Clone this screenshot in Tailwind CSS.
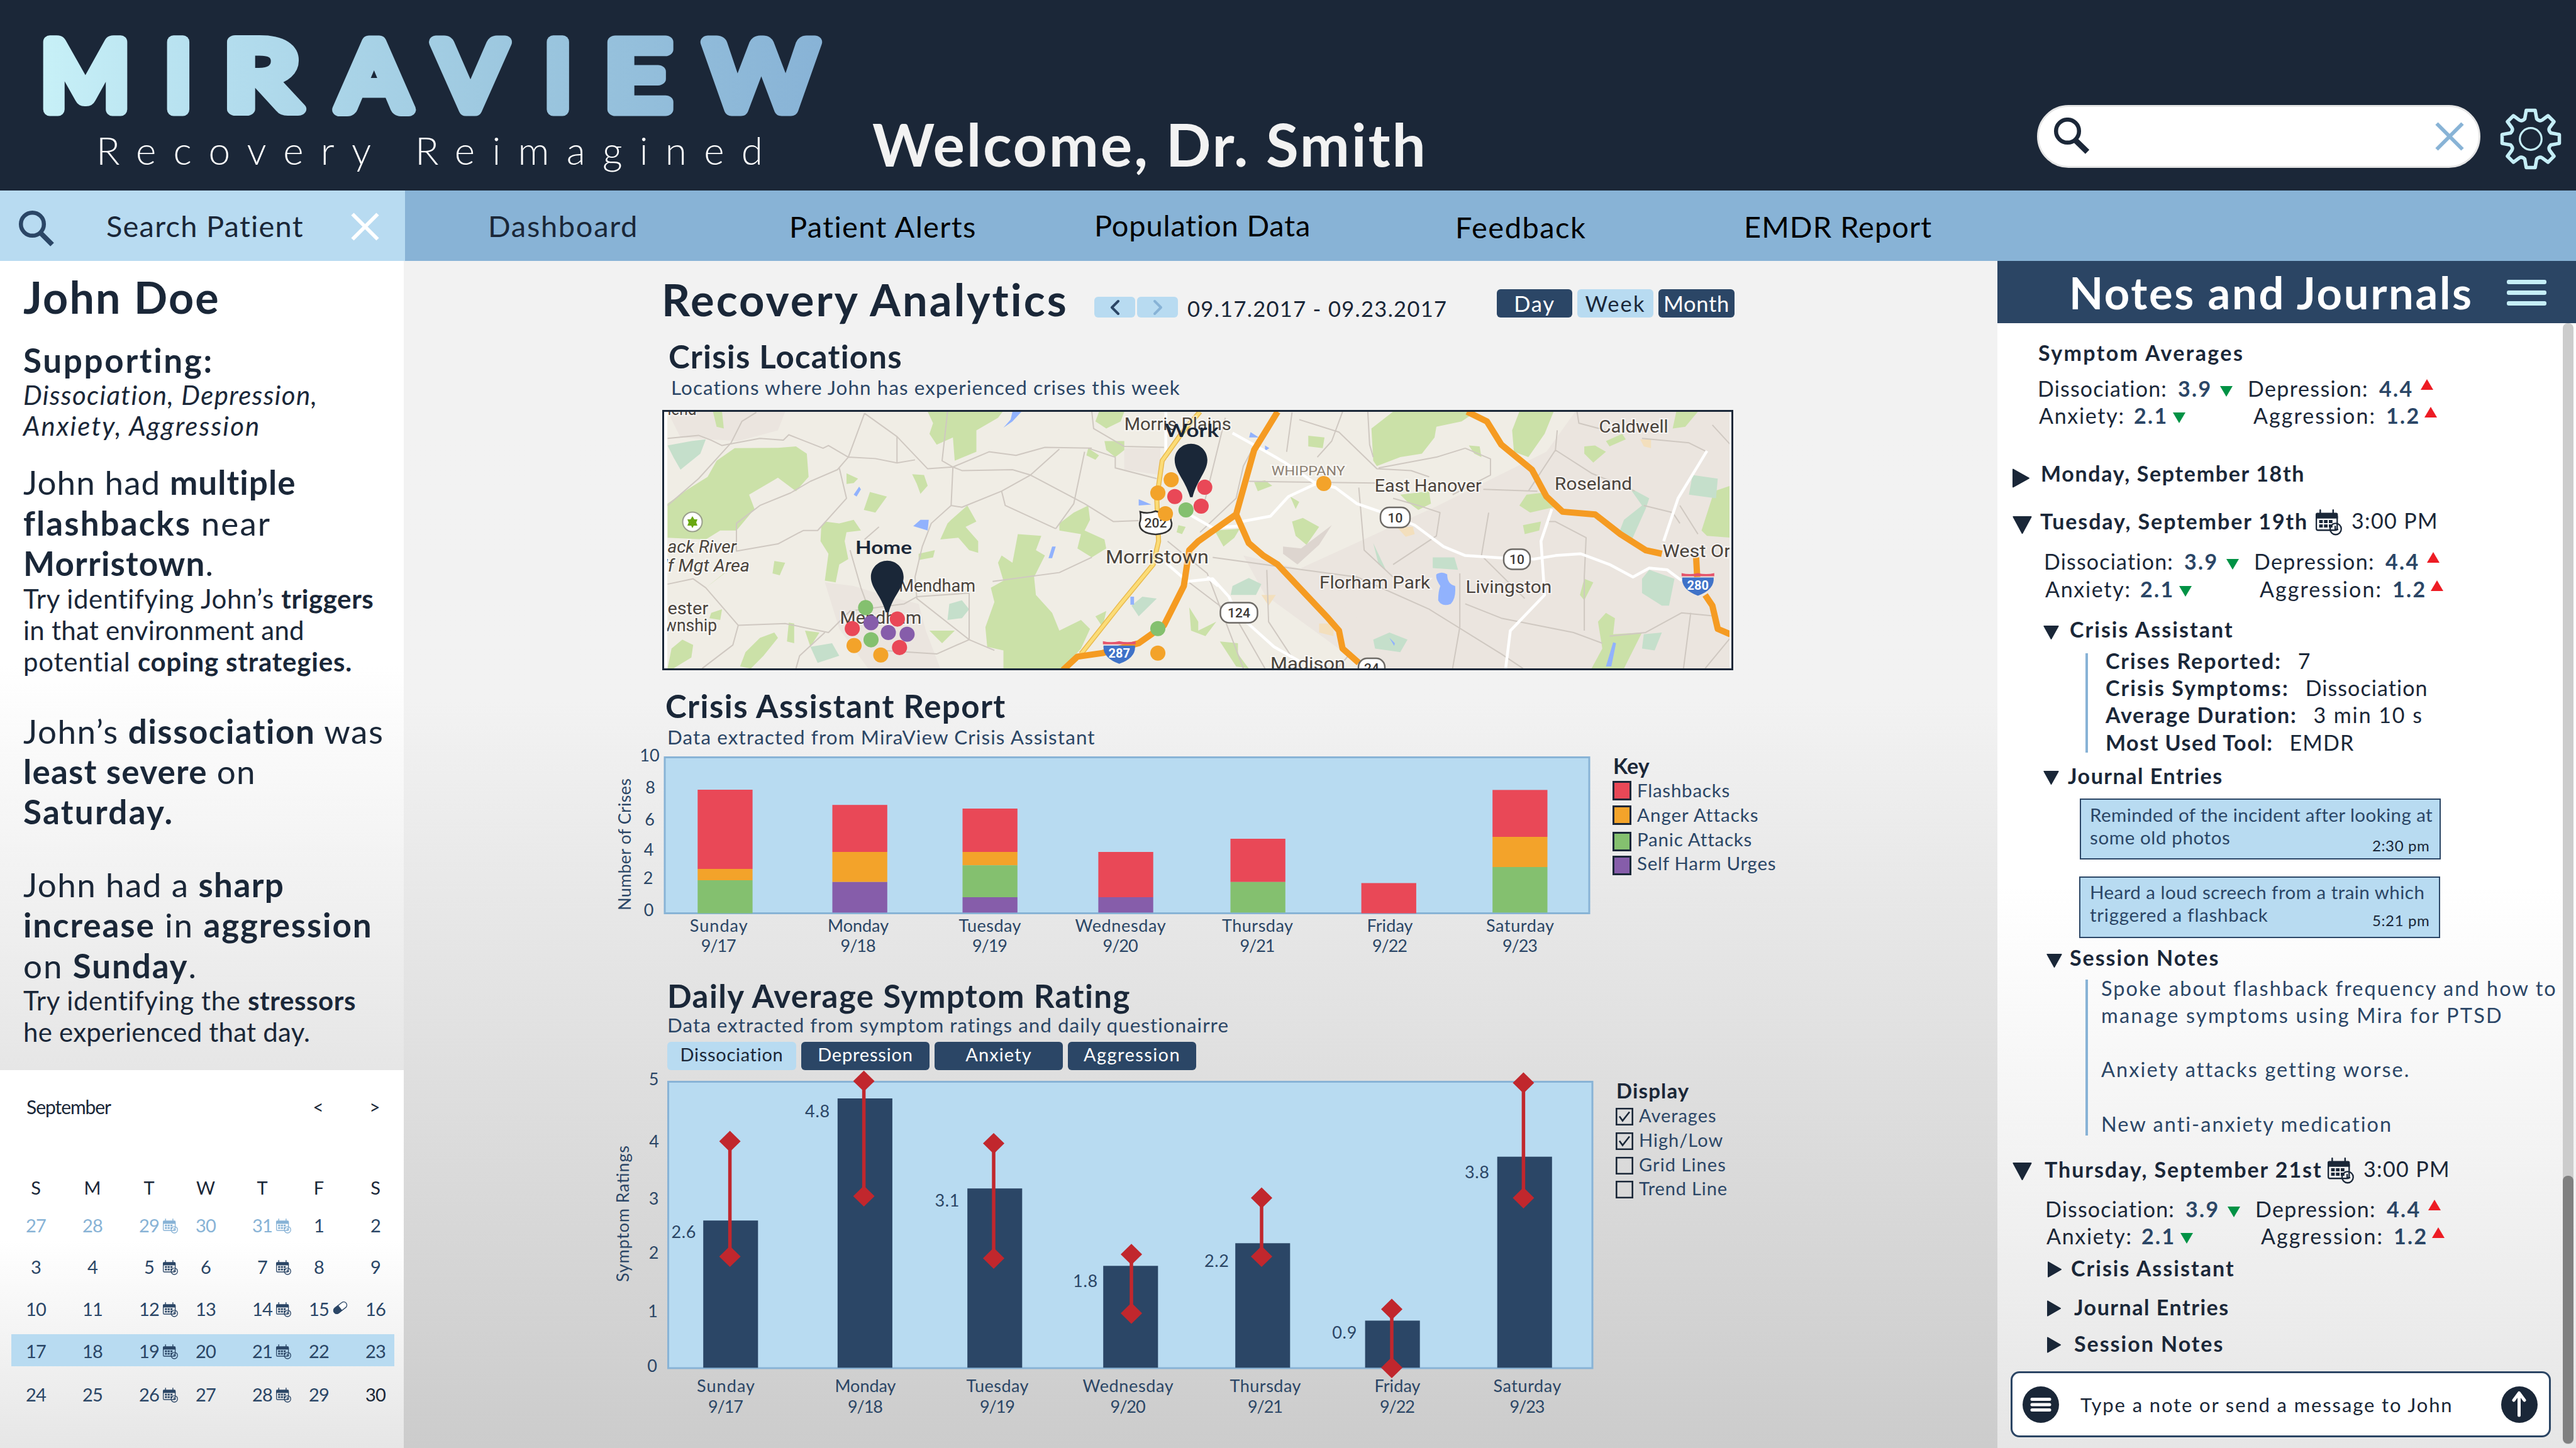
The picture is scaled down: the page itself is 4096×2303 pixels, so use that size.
<!DOCTYPE html>
<html lang="en">
<head>
<meta charset="utf-8">
<title>MiraView – Recovery Reimagined</title>
<script src="https://cdn.jsdelivr.net/npm/@tailwindcss/browser@4"></script>
</head>
<body class="w-[4096px] h-[2303px] overflow-hidden font-[Lato,sans-serif] text-[#1a2738] bg-white whitespace-nowrap">

<!-- Shared icons -->
<svg class="hidden">
  <symbol id="cal" viewBox="0 0 24 24">
    <mask id="calmask" maskUnits="userSpaceOnUse" x="0" y="0" width="24" height="24">
      <rect width="24" height="24" fill="#fff"/>
      <circle cx="18.2" cy="17.9" r="6.7" fill="#000"/>
      <path d="M4.2 0V5.4M15.9 0V5.4" stroke="#000" stroke-width="3.2" stroke-linecap="round"/>
    </mask>
    <g mask="url(#calmask)">
      <path d="M1.6 3.2H18.6Q20.2 3.2 20.2 4.8V8.4H0V4.8Q0 3.2 1.6 3.2Z" fill="currentColor"/>
      <path d="M.65 6V17.4Q.65 19 2.2 19H18Q19.6 19 19.6 17.4V6" fill="none" stroke="currentColor" stroke-width="1.3"/>
      <path d="M3.2 9.7h3.3v2.8H3.2zM7.6 9.7h3.3v2.8H7.6zM12 9.7h3.3v2.8H12zM3.2 13.7h3.3v2.8H3.2zM7.6 13.7h3.3v2.8H7.6zM12 13.7h3.3v2.8H12z" fill="currentColor"/>
    </g>
    <path d="M4.2 .7V4.6M15.9 .7V4.6" stroke="currentColor" stroke-width="1.4" stroke-linecap="round"/>
    <circle cx="18.2" cy="17.9" r="5.1" fill="none" stroke="currentColor" stroke-width="1.3"/>
    <path d="M17.8 15V18.4H20.6" fill="none" stroke="currentColor" stroke-width="1.3"/>
  </symbol>
  <symbol id="right" viewBox="0 0 27 31" preserveAspectRatio="none"><path d="M1 1.5V29.5L26 15.5Z" fill="#1a2738" stroke="#1a2738" stroke-width="2" stroke-linejoin="round"/></symbol>
  <symbol id="down" viewBox="0 0 31 28" preserveAspectRatio="none"><path d="M1.5 1H29.5L15.5 27Z" fill="#1a2738" stroke="#1a2738" stroke-width="2" stroke-linejoin="round"/></symbol>
</svg>

<!-- Header -->
<header class="flex items-start h-[303px] bg-[#1b2738]">
  <svg class="shrink-0 w-[1386px] h-[303px]" viewBox="0 0 1386 303">
    <defs>
      <linearGradient id="brand" gradientUnits="userSpaceOnUse" x1="71" y1="0" x2="1306" y2="0">
        <stop offset="0" stop-color="#c7f0f7"/><stop offset=".25" stop-color="#b2dced"/><stop offset=".6" stop-color="#9cc7df"/><stop offset="1" stop-color="#88b3d6"/>
      </linearGradient>
    </defs>
    <g fill="url(#brand)" stroke="url(#brand)" stroke-width="21" stroke-linejoin="round" text-anchor="middle" class="text-[149px]">
      <text x="135.600" y="173.500" textLength="140" lengthAdjust="spacingAndGlyphs">M</text>
      <text x="283.400" y="173.500">I</text>
      <text x="416" y="173.500" textLength="118" lengthAdjust="spacingAndGlyphs">R</text>
      <text x="594.800" y="173.500" textLength="111" lengthAdjust="spacingAndGlyphs">A</text>
      <text x="748" y="173.500" textLength="110" lengthAdjust="spacingAndGlyphs">V</text>
      <text x="887" y="173.500">I</text>
      <text x="1014" y="173.500" textLength="104" lengthAdjust="spacingAndGlyphs">E</text>
      <text x="1210.500" y="173.500" textLength="175" lengthAdjust="spacingAndGlyphs">W</text>
    </g>
    <text x="153" y="262.400" fill="#fff" class="text-[62px] font-light" textLength="1060">Recovery Reimagined</text>
  </svg>
  <h1 class="pt-[179px] pl-px text-[94.5px] leading-[100px] font-bold tracking-[0.03em] text-[#f2f2f2]">Welcome, Dr. Smith</h1>
  <div class="ml-auto mr-[31px] mt-[167px] flex w-[705px] h-[100px] rounded-[50px] border-[3px] border-[#e6e6e6] bg-white pl-[23px] pt-[17px] pr-[23px] justify-between">
    <svg class="w-[62px] h-[62px]" viewBox="0 0 62 62" fill="none" stroke="#1b2738"><circle cx="22.5" cy="21.5" r="18.3" stroke-width="6.5"/><path d="M34.5 35.5L54 54.5" stroke-width="9"/></svg>
    <svg class="mt-[7px] w-[46px] h-[46px]" viewBox="0 0 46 46" fill="none" stroke="#88b3d6" stroke-width="6"><path d="M2.5 2.5L43.5 43.5M43.5 2.5L2.5 43.5"/></svg>
  </div>
  <svg class="mt-[172px] mr-[23px] w-[98px] h-[98px]" viewBox="-49 -49 98 98" fill="none" stroke="#c5eef7" stroke-width="5.5" stroke-linejoin="round">
    <path d="M-7.1 -45.5H7.1L9.5 -32Q14 -27.5 18 -30L27.5 -37L37 -27.5L30 -18Q27.5 -14 32 -9.5L45.5 -7.1V7.1L32 9.5Q27.5 14 30 18L37 27.5L27.5 37L18 30Q14 27.5 9.5 32L7.1 45.5H-7.1L-9.5 32Q-14 27.5 -18 30L-27.5 37L-37 27.5L-30 18Q-27.5 14 -32 9.5L-45.5 7.1V-7.1L-32 -9.5Q-27.5 -14 -30 -18L-37 -27.5L-27.5 -37L-18 -30Q-14 -27.5 -9.5 -32Z"/>
    <circle r="17.3" stroke-width="3.2"/>
  </svg>
</header>

<!-- Navigation -->
<nav class="flex h-[112px] bg-[#88b3d6] text-[47px] leading-[56px] text-black">
  <div class="flex w-[644px] bg-[#b8dbf1] text-[#1a2738]">
    <svg class="ml-[29px] mt-[31px] w-[60px] h-[60px]" viewBox="0 0 60 60" fill="none" stroke="#2b4666"><circle cx="22.5" cy="22.5" r="18.3" stroke-width="6.5"/><path d="M35.5 36.5L54 55" stroke-width="8"/></svg>
    <span class="ml-[80px] pt-[28px] w-[389px] tracking-[0.026em]">Search Patient</span>
    <svg class="mt-[35px] w-[45px] h-[45px]" viewBox="0 0 45 45" fill="none" stroke="#fff" stroke-width="6"><path d="M2.5 2.500L42.5 42.5M42.5 2.5L2.5 42.5"/></svg>
  </div>
  <a class="ml-[132px] w-[479px] pt-[28px] tracking-[0.036em] text-[#1a2738]">Dashboard</a>
  <a class="w-[485px] pt-[29px] tracking-[0.029em]">Patient Alerts</a>
  <a class="w-[574px] pt-[27px] tracking-[0.0175em]">Population Data</a>
  <a class="w-[459px] pt-[30px] tracking-[0.0317em]">Feedback</a>
  <a class="pt-[29px] tracking-[0.022em]">EMDR Report</a>
</nav>

<div class="flex h-[1888px]">

  <!-- Patient summary -->
  <aside class="flex flex-col w-[642px] shrink-0">
    <section class="h-[1287px] pt-[15px] pl-[37px] bg-linear-to-b from-white from-50% to-[#e6e6e6] text-[42px] leading-[50.3px]">
      <h2 class="text-[70px] leading-[84px] font-bold tracking-[0.031em]">John Doe</h2>
      <h3 class="mt-[27px] text-[53px] leading-[64px] font-bold tracking-[0.05em]">Supporting:</h3>
      <p class="-mt-px leading-[48.7px] italic"><span class="tracking-[0.032em]">Dissociation, Depression,</span><br><span class="tracking-[0.05em]">Anxiety, Aggression</span></p>
      <p class="mt-[34px] text-[53px] leading-[64.4px]"><span class="tracking-[0.02em]">John had <b>multiple</b></span><br><span class="tracking-[0.039em]"><b>flashbacks</b> near</span><br><span class="tracking-[0.022em]"><b>Morristown</b>.</span></p>
      <p class="-mt-[2px]"><span class="tracking-[0.0145em]">Try identifying John’s <b>triggers</b></span><br><span class="tracking-[0.0058em]">in that environment and</span><br><span class="tracking-[0.019em]">potential <b>coping strategies.</b></span></p>
      <p class="mt-[53px] text-[53px] leading-[64.4px]"><span class="tracking-[0.028em]">John’s <b>dissociation</b> was</span><br><span class="tracking-[0.0235em]"><b>least severe</b> on</span><br><span class="tracking-[0.043em]"><b>Saturday.</b></span></p>
      <p class="mt-[51px] text-[53px] leading-[64.4px]"><span class="tracking-[0.026em]">John had a <b>sharp</b></span><br><span class="tracking-[0.035em]"><b>increase</b> in <b>aggression</b></span><br><span class="tracking-[0.035em]">on <b>Sunday</b>.</span></p>
      <p class="-mt-[2px]"><span class="tracking-[0.0145em]">Try identifying the <b>stressors</b></span><br><span class="tracking-[0.0053em]">he experienced that day.</span></p>
    </section>

    <section class="h-[601px] pt-[40px] bg-linear-to-b from-white from-45% to-[#e6e6e6]">
      <div class="ml-[11px] grid grid-cols-[450px_90px_90px] text-center text-[30px] leading-[36px]">
        <span class="pl-[31px] text-left tracking-[-0.035em]">September</span><span>&lt;</span><span>&gt;</span>
      </div>
      <div class="ml-[12px] mt-[93px] mb-[9px] grid grid-cols-[repeat(7,90px)] text-center text-[29px] leading-[36px]">
        <span>S</span><span>M</span><span>T</span><span>W</span><span>T</span><span>F</span><span>S</span>
      </div>
      <div id="weeks" class="text-[29px] text-[#2b4666]"></div>
    </section>
  </aside>

  <!-- Analytics -->
  <main class="w-[2534px] shrink-0 bg-linear-to-b from-[#f2f2f2] from-37% to-[#cccccc] pt-[17px]">
    <div class="flex items-start ml-[410px] h-[84px]">
      <h2 class="w-[688px] pt-[2px] text-[70.5px] leading-[84px] font-bold tracking-[0.0433em]">Recovery Analytics</h2>
      <div class="flex gap-[3px] mt-[40px]">
        <span class="flex w-[65px] h-[33px] rounded-[6px] bg-[#b8dbf1] items-center justify-center"><svg class="w-[18px] h-[26px]" viewBox="0 0 18 26" fill="none" stroke="#2b4666" stroke-width="4" stroke-linecap="round" stroke-linejoin="round"><path d="M14 3L4 13L14 23"/></svg></span>
        <span class="flex w-[65px] h-[33px] rounded-[6px] bg-[#b8dbf1] items-center justify-center"><svg class="w-[18px] h-[26px]" viewBox="0 0 18 26" fill="none" stroke="#88b3d6" stroke-width="4" stroke-linecap="round" stroke-linejoin="round"><path d="M4 3L14 13L4 23"/></svg></span>
      </div>
      <span class="ml-[15px] mt-[39px] w-[492px] text-[34.5px] leading-[40px] tracking-[0.038em]">09.17.2017 - 09.23.2017</span>
      <div class="flex gap-[8px] mt-[28px] text-center text-[34.5px] leading-[45px] text-white">
        <span class="w-[120px] h-[45px] rounded-[6px] bg-[#2b4666] tracking-[0.05em]">Day</span>
        <span class="w-[121px] h-[45px] rounded-[6px] bg-[#b8dbf1] text-[#1a2738] tracking-[0.06em]">Week</span>
        <span class="w-[121px] h-[45px] rounded-[6px] bg-[#2b4666] tracking-[0.02em]">Month</span>
      </div>
    </div>

    <h3 class="ml-[421px] mt-[21px] text-[51px] leading-[60px] font-bold tracking-[0.0234em]">Crisis Locations</h3>
    <p class="ml-[425px] text-[31.4px] leading-[38px] tracking-[0.0345em] text-[#2b4666]">Locations where John has experienced crises this week</p>

    <!-- Map -->
    <svg class="ml-[411px] mt-[17px] block w-[1703px] h-[414px] bg-white" viewBox="0 0 1703 414">
      <defs><clipPath id="mapclip"><rect x="8" y="2.8" width="1689" height="408.5"/></clipPath></defs>
      <g clip-path="url(#mapclip)">
        <rect width="1703" height="414" fill="#f0ede5"/>
        <g transform="translate(-16.8 -18.8) scale(.57366 .28454)">
          <g fill="#ebe5df">
            <path d="M44 76H370L350 180L240 240L80 220ZM480 1030L560 1050L640 1100L740 1150L760 1300L800 1511H600L520 1290ZM1310 280H1410V430L1310 400ZM1640 880L1900 1000L2050 1150L2100 1511H1980L1700 1100Z"/>
            <path d="M2560 76H2990V1511H2080L1960 1240L1800 950L2180 600L2480 300Z"/>
          </g>
          <g fill="#cbe1a8">
            <path d="M230 280L350 278L400 270L430 310L435 440L400 520L350 445L270 540L285 620L235 740L190 740L150 790L44 780V590L100 510L155 440L180 350Z"/>
            <path d="M765 76H973L960 110L900 180V300L840 350L835 220L790 260L770 200L780 140ZM170 76H195L200 170L180 160Z"/>
            <path d="M480 690L520 700L560 680L580 740L540 750L535 800L545 900L520 930L510 1030L480 1020L490 870L468 800L470 720ZM605 525L652 550L620 640L588 625ZM540 420L572 450L560 475L540 480ZM722 425L755 430L765 490L745 535L735 480ZM740 870L785 850L780 890L740 905Z"/>
            <path d="M830 680L875 600L900 690L870 720L905 800V865L880 850L850 780L800 790L820 700Z"/>
            <path d="M970 880L1000 920L1015 760L1080 770L1065 850L1090 880L1060 1000L1065 1100L1110 1200L1130 1300L1190 1240L1215 1290L1190 1400L1140 1511H975V1410L930 1390L925 1280L950 1140L940 1060L975 1020L960 920Z"/>
            <path d="M1170 640L1210 600L1215 680L1200 740L1255 790L1260 840L1220 890L1180 840L1190 760L1130 740V700ZM1240 76H1310L1300 130L1260 170L1230 130ZM1255 240L1310 240V290L1285 330L1260 290ZM1230 1220L1260 1190L1250 1280ZM1210 280L1240 320L1230 345L1205 320Z"/>
            <path d="M55 1400L85 1350L115 1380L110 1450L60 1511H44ZM340 1310L350 1340L310 1440L275 1511L245 1500L260 1420L300 1340ZM380 1255L395 1260V1370L375 1360ZM425 1300L465 1310L440 1390ZM340 910L370 920L355 990L335 980ZM200 980L215 960L150 1060ZM165 1200L195 1180L190 1240L160 1230ZM770 1300L840 1300L805 1370Z"/>
            <path d="M2055 76H2285L2245 130L2175 160L2170 220L2135 310L2075 330L2010 380L2000 350L1995 170ZM2405 76H2500L2475 200L2430 330L2390 300L2385 180ZM2840 76H2900L2865 160L2830 170Z"/>
            <path d="M2585 270L2615 265L2645 300L2610 360L2585 310ZM2690 200L2700 230L2655 270L2645 240ZM2075 540L2155 520L2160 590L2125 625L2095 580ZM1775 690L1805 670L1850 720L1815 820L1785 770ZM2425 540L2465 530L2500 610L2435 640L2405 600ZM1820 210L1865 220L1860 280L1820 270Z"/>
            <path d="M2945 520L2990 490V780L2925 770L2910 740ZM2645 1200L2670 1230L2665 1320L2745 1310L2695 1511H2605L2635 1400L2623 1250ZM2585 1010L2610 1030L2585 1130L2573 1100ZM1575 1360L1625 1370V1430L1655 1511L1620 1500ZM1490 1170L1515 1250V1300L1565 1250L1535 1330L1495 1300ZM1560 740L1630 730L1615 780L1585 830ZM1670 470L1700 460L1720 490L1680 520ZM2265 265L2295 270L2300 330L2280 310ZM1770 550L1795 580L1785 620ZM2415 710L2465 690L2460 740L2420 760ZM1460 710L1480 720L1470 760L1455 750Z"/>
          </g>
          <g fill="#c5dfcb">
            <path d="M44 265L110 240L150 230L135 310L80 400L60 330ZM825 1150L860 1130L880 1180L860 1230L820 1240ZM440 1390L500 1370L520 1440L460 1480ZM1330 1160L1360 1110L1400 1120L1350 1220Z"/>
            <path d="M1610 1050L1655 1005L1690 1040L1675 1100H1605ZM2000 1350L2045 1310L2095 1350L2075 1420L2005 1400ZM2765 960L2835 1010L2820 1160H2800L2745 1090V1010ZM2710 500L2765 560L2755 620L2715 800L2680 760L2695 680L2745 600ZM2165 890H2225L2235 960L2165 950ZM2885 430L2955 450L2950 560L2875 540ZM2000 810L2035 960L2015 930ZM2750 1320L2800 1310L2780 1410L2745 1400Z"/>
          </g>
          <path fill="#f3dfbd" d="M2065 720H2110L2115 760L2090 775ZM2740 230H2770V280L2750 270ZM1690 1100H1730L1710 1160ZM1850 1260H1890V1330L1850 1310Z"/>
          <path fill="#ddd5cf" d="M1750 830L1800 840L1885 710L1850 820L1790 930L1750 870Z"/>
          <path fill="#91b2fd" d="M1000 76H1025L1000 130L975 165L995 120ZM745 680L768 680L765 740L725 715ZM575 495L580 510L568 550L560 540ZM1110 830H1120L1110 895H1100ZM1350 565L1385 595L1350 600ZM2175 985Q2190 965 2205 985Q2205 1040 2227 1050Q2230 1120 2215 1150Q2190 1170 2180 1130Q2180 1080 2186 1050Q2172 1010 2175 985ZM2665 1365L2673 1370L2660 1500H2645ZM1660 190L1683 220H1656ZM1700 265L1712 280L1700 295ZM1327 1110H1337V1155H1327ZM2045 1340L2060 1370L2058 1385Z"/>
          <g fill="none" stroke="#cfc8c1" stroke-width="2" stroke-linejoin="round">
            <path vector-effect="non-scaling-stroke" d="M44 225L130 208L165 235L195 265L300 225L365 235L380 205L475 280L490 265L545 330L620 338L680 362L730 345M590 85L545 330L515 400L440 465L385 530L300 600L235 700V855L350 815L420 740H460L540 560L520 390M590 85L680 215L765 395L835 385L935 300L1010 320L1090 275L1220 280M835 385L860 405L1000 400L1050 430L1200 590L1280 690L1350 685M1220 76L1225 170L1310 270L1420 275M1130 285L1050 430L970 520L860 610L830 600L835 385L805 350L820 76M830 600L775 700L750 830L730 1000L735 1120L880 1350L790 1430L640 1410"/>
            <path vector-effect="non-scaling-stroke" d="M220 250L130 450L44 600M220 250L250 130L290 80M44 1040L115 1010L150 1060L240 1270L370 1260L490 1310L550 1190L700 1150L735 1110L880 1090M240 1270L225 1380L140 1511M970 520L980 600L1120 730M945 1025L1130 975L1220 890M550 850L580 1060L600 1170M1200 300L1170 590L1120 730M590 790L630 720M680 215V360M400 1511L410 1440L480 1310M880 1090V1350L950 1410M1285 330V390L1400 450M1210 280L1285 330M1430 800L1540 980L1640 1511M1470 1000L1620 1230L1700 1511"/>
            <path vector-effect="non-scaling-stroke" d="M1795 120L1905 190L2010 395L2105 405L2155 440M1915 76L1885 240L1845 330M1655 465L2005 475M2305 510L2455 520M2255 280L2175 330L2015 390M2255 280L2325 340V430L2220 540M2565 76L2570 140L2645 180M2505 290L2605 420L2725 520M2745 225L2875 250L2925 300M1555 890L1805 960L1955 1000L2155 1180L2355 1430L2415 1511M1960 500L1975 850L2055 1000M2255 1150L2355 1230L2555 1310L2635 1370M2655 1330L2755 1310L2855 1200L2955 1220M2585 1300V1000L2590 780L2505 690L2480 690M1705 960L1710 1250L1795 1511M2055 560L2125 600L2185 640L2175 770L2055 930M2320 640L2300 880L2420 1120M2510 180L2505 290L2430 520M2940 150L2990 260M2850 600L2900 760M1775 80L1760 300M1985 76L1990 260L2000 330M2750 600L2830 640L2850 700M2880 1200L2860 1511M2920 1511L2990 1340M1590 110L1530 600M1680 230L1640 380L1620 560L1520 750M1900 1511L1940 1420M2220 1511L2240 1280L2240 980"/>
          </g>
          <path fill="none" stroke="#fff" stroke-width="4.5" stroke-linejoin="round" vector-effect="non-scaling-stroke" d="M1610 195L1695 290L1755 360L1835 470L1895 500L1955 590L2055 660L2115 710L2195 830L2255 880L2365 895L2445 900L2505 880L2575 870L2655 930L2720 1000L2765 950L2815 960L2855 1020M1635 690L1715 660L1765 550L1840 480M2925 295L2845 560L2805 800M2495 620L2465 800L2475 1100L2380 1300L2367 1511M1490 650L1555 725L1625 715M1425 920L1485 1025L1555 1010L1600 1110L1620 1200L1725 1390L1795 1470M1425 76V340M1540 1000L1570 1050"/>
          <g fill="none" stroke-linejoin="round">
            <path vector-effect="non-scaling-stroke" stroke="#e9b94e" stroke-width="8" d="M1520 76L1475 180L1415 350L1400 560L1405 800L1390 930L1300 1150L1190 1430"/>
            <path vector-effect="non-scaling-stroke" stroke="#fbdc77" stroke-width="5" d="M1520 76L1475 180L1415 350L1400 560L1405 800L1390 930L1300 1150L1190 1430"/>
            <path vector-effect="non-scaling-stroke" stroke="#f59b22" stroke-width="10" d="M1735 76L1670 290L1645 470L1620 650L1515 800L1490 850L1475 1050L1420 1270L1350 1370L1250 1425L1180 1445L1140 1520M1620 650L1655 810L1695 880L1735 930L1875 1230L1905 1300L1915 1400L1960 1480M2260 76L2315 130L2355 260L2440 400L2480 550L2525 635L2615 650L2685 760L2755 850L2800 870M2895 890L2898 1000M2920 1100L2940 1160L2955 1290L2990 1320"/>
          </g>
        </g>

        <circle cx="48" cy="178" r="15.5" fill="#fff" stroke="#9a9f8c" stroke-width="2"/>
        <path d="M48 169L51 174L56 174L54 179L56 184L50 184L48 188L46 184L40 184L42 179L40 174L45 174Z" fill="#6aa812"/>

        <g font-family="Roboto" font-size="27.5" fill="#4a433c" stroke="#fff" stroke-width="4" stroke-opacity=".55" paint-order="stroke">
          <text x="8.4" y="7.6" textLength="46" lengthAdjust="spacingAndGlyphs">lend</text>
          <text x="734.7" y="31.8" textLength="170" lengthAdjust="spacingAndGlyphs">Morris Plains</text>
          <text x="704.9" y="243.5" font-size="29" textLength="164" lengthAdjust="spacingAndGlyphs">Morristown</text>
          <text x="376.2" y="288.5" textLength="122" lengthAdjust="spacingAndGlyphs">Mendham</text>
          <text x="282.6" y="340.3" textLength="129.6" lengthAdjust="spacingAndGlyphs">Mendham</text>
          <text x="8.4" y="227.3" font-style="italic" textLength="109.5" lengthAdjust="spacingAndGlyphs">ack River</text>
          <text x="2" y="256.6" font-style="italic" textLength="137" lengthAdjust="spacingAndGlyphs">lf Mgt Area</text>
          <text x="8.4" y="324.9" textLength="64.8" lengthAdjust="spacingAndGlyphs">ester</text>
          <text x="3" y="352" textLength="84" lengthAdjust="spacingAndGlyphs">wnship</text>
          <text x="968.8" y="104.4" font-size="20" fill="#8c7f72" textLength="117" lengthAdjust="spacingAndGlyphs">WHIPPANY</text>
          <text x="1132.8" y="129.7" textLength="170" lengthAdjust="spacingAndGlyphs">East Hanover</text>
          <text x="1419.1" y="126.9" textLength="123" lengthAdjust="spacingAndGlyphs">Roseland</text>
          <text x="1489.6" y="36.1" textLength="110" lengthAdjust="spacingAndGlyphs">Caldwell</text>
          <text x="1590.6" y="233.9" textLength="108" lengthAdjust="spacingAndGlyphs">West Or</text>
          <text x="1045" y="283.7" textLength="176" lengthAdjust="spacingAndGlyphs">Florham Park</text>
          <text x="1277.4" y="291.4" textLength="137" lengthAdjust="spacingAndGlyphs">Livingston</text>
          <text x="967" y="412.9" textLength="119" lengthAdjust="spacingAndGlyphs">Madison</text>
        </g>

        <!-- Route badges -->
        <g fill="#fff" stroke="#6d6a66" stroke-width="2.5">
          <rect x="1142" y="155" width="47" height="32" rx="14"/><rect x="1338" y="221.5" width="42" height="32" rx="14"/>
          <rect x="887.5" y="306.5" width="59" height="32" rx="14"/><rect x="1107" y="395" width="42" height="32" rx="14"/>
          <path stroke="#333" d="M760 162Q772 166 784.5 161Q797 166 809 162Q807 172 810 180Q811 196 784.5 198Q758 196 759 180Q762 172 760 162Z"/>
        </g>
        <g font-family="Roboto" font-size="21" font-weight="500" fill="#3c3835" text-anchor="middle">
          <text x="1165.5" y="178.5">10</text><text x="1359" y="245">10</text><text x="917" y="330">124</text><text x="1128" y="418">24</text><text x="784.5" y="187">202</text>
        </g>
        <g transform="translate(726.7 366.8)"><path d="M-26 1Q-13 4 0 1Q13 4 26 1V6H-26Z" fill="#e5546b"/><path d="M-25 8H25Q27 27 0 37Q-27 27 -25 8Z" fill="#3f72c8"/><text y="27" font-family="Roboto" font-size="20" font-weight="700" fill="#fff" text-anchor="middle">287</text></g>
        <g transform="translate(1646.8 258.6)"><path d="M-26 1Q-13 4 0 1Q13 4 26 1V6H-26Z" fill="#e5546b"/><path d="M-25 8H25Q27 27 0 37Q-27 27 -25 8Z" fill="#3f72c8"/><text y="27" font-family="Roboto" font-size="20" font-weight="700" fill="#fff" text-anchor="middle">280</text></g>
      </g>

      <path fill="#1a2738" transform="translate(357.8 239.8)" d="M0 0C-14.5 0 -26 11.5 -26 26C-26 44 -9 56 -2.5 82H2.5C9 56 26 44 26 26C26 11.5 14.5 0 0 0Z"/>
      <path fill="#1a2738" transform="translate(840.8 53.8)" d="M0 0C-14.5 0 -26 11.5 -26 26C-26 44 -9 58 -1.5 85H2.5C9 58 26 44 26 26C26 11.5 14.5 0 0 0Z"/>
      <g fill="#1a2738" class="text-[29px] font-bold">
        <text x="307" y="228.8" textLength="90" lengthAdjust="spacingAndGlyphs">Home</text>
        <text x="799" y="43.2" textLength="86" lengthAdjust="spacingAndGlyphs">Work</text>
      </g>
      <g transform="translate(-16.8 -18.8) scale(.57366 .28454)" id="crises"></g>
      <rect x="1.5" y="1.5" width="1700" height="411" fill="none" stroke="#1a2738" stroke-width="3"/>
    </svg>

    <h3 class="ml-[416px] mt-[27px] text-[51px] leading-[60px] font-bold tracking-[0.028em]">Crisis Assistant Report</h3>
    <p class="ml-[419px] text-[31.4px] leading-[38px] tracking-[0.0355em] text-[#2b4666]">Data extracted from MiraView Crisis Assistant</p>

    <div class="flex items-start ml-[328px] -mt-px h-[332px]">
      <svg class="w-[1570px] h-[332px]" viewBox="970 1190 1570 332" fill="#2b4666" font-size="27" id="report">
        <rect x="1057" y="1204.5" width="1470" height="248" fill="#b8dbf1" stroke="#88b3d6" stroke-width="3"/>
      </svg>
      <div class="pt-[8px] text-[29.5px] leading-[38.8px] text-[#2b4666]">
        <h4 class="pl-[25px] text-[34px] leading-[40px] font-bold text-[#1a2738]">Key</h4>
        <div class="flex pl-[24px] gap-[9px]"><i class="mt-[4px] w-[30px] h-[31px] border-3 border-[#1a2738] bg-[#e94857]"></i><span class="tracking-[0.026em]">Flashbacks</span></div>
        <div class="flex pl-[24px] gap-[9px]"><i class="mt-[4px] w-[30px] h-[31px] border-3 border-[#1a2738] bg-[#f3a32a]"></i><span class="tracking-[0.034em]">Anger Attacks</span></div>
        <div class="flex pl-[24px] gap-[9px]"><i class="mt-[7px] w-[30px] h-[31px] border-3 border-[#1a2738] bg-[#84c06f]"></i><span class="tracking-[0.027em]">Panic Attacks</span></div>
        <div class="flex pl-[24px] gap-[9px]"><i class="mt-[7px] w-[30px] h-[31px] border-3 border-[#1a2738] bg-[#865daa]"></i><span class="tracking-[0.025em]">Self Harm Urges</span></div>
      </div>
    </div>

    <h3 class="ml-[419px] mt-[32px] text-[51px] leading-[60px] font-bold tracking-[0.028em]">Daily Average Symptom Rating</h3>
    <p class="ml-[419px] -mt-[3px] text-[31.4px] leading-[38px] tracking-[0.0321em] text-[#2b4666]">Data extracted from symptom ratings and daily questionairre</p>
    <div class="flex gap-[8px] ml-[419px] mt-[8px] text-center text-[29px] leading-[39px] text-white">
      <span class="w-[205px] h-[45px] rounded-[6px] bg-[#b8dbf1] text-[#1a2738] tracking-[0.0249em]">Dissociation</span>
      <span class="w-[204px] h-[45px] rounded-[6px] bg-[#2b4666] tracking-[0.0283em]">Depression</span>
      <span class="w-[204px] h-[45px] rounded-[6px] bg-[#2b4666] tracking-[0.0377em]">Anxiety</span>
      <span class="w-[204px] h-[45px] rounded-[6px] bg-[#2b4666] tracking-[0.05em]">Aggression</span>
    </div>

    <div class="flex items-start ml-[328px]">
      <svg class="w-[1570px] h-[556px]" viewBox="970 1702 1570 556" fill="#2b4666" font-size="27" id="rating">
        <rect x="1062.5" y="1720.5" width="1469.5" height="455.5" fill="#b8dbf1" stroke="#88b3d6" stroke-width="3"/>
      </svg>
      <div class="pt-[12px] text-[29px] leading-[38.8px] text-[#2b4666]">
        <h4 class="pl-[30px] mb-px text-[33px] leading-[40px] font-bold tracking-[0.035em] text-[#1a2738]">Display</h4>
        <div class="flex pl-[29px] gap-[9px]"><svg class="mt-[7px] w-[28px] h-[28px]" viewBox="0 0 28 28" fill="none" stroke="#1a2738" stroke-width="2.6"><path d="M1.3 1.3H26.7V26.7H1.3ZM6 13.5L11 20.5L22 6.5"/></svg><span class="tracking-[0.033em]">Averages</span></div>
        <div class="flex pl-[29px] gap-[9px]"><svg class="mt-[7px] w-[28px] h-[28px]" viewBox="0 0 28 28" fill="none" stroke="#1a2738" stroke-width="2.6"><path d="M1.3 1.3H26.7V26.7H1.3ZM6 13.5L11 20.5L22 6.5"/></svg><span class="tracking-[0.035em]">High/Low</span></div>
        <div class="flex pl-[29px] gap-[9px]"><svg class="mt-[7px] w-[28px] h-[28px]" viewBox="0 0 28 28" fill="none" stroke="#1a2738" stroke-width="2.6"><path d="M1.3 1.3H26.7V26.7H1.3Z"/></svg><span class="tracking-[0.037em]">Grid Lines</span></div>
        <div class="flex pl-[29px] gap-[9px]"><svg class="mt-[7px] w-[28px] h-[28px]" viewBox="0 0 28 28" fill="none" stroke="#1a2738" stroke-width="2.6"><path d="M1.3 1.3H26.7V26.7H1.3Z"/></svg><span class="tracking-[0.029em]">Trend Line</span></div>
      </div>
    </div>
  </main>

  <!-- Notes and journals -->
  <aside class="w-[920px] shrink-0">
    <div class="flex h-[99px] pl-[114px] bg-[#2b4564] text-white">
      <h2 class="w-[696px] text-[70.5px] leading-[99px] font-bold tracking-[0.0375em]">Notes and Journals</h2>
      <div class="mt-[30px] flex flex-col gap-[10px]"><i class="w-[63px] h-[7px] rounded-[3px] bg-[#c5eef7]"></i><i class="w-[63px] h-[7px] rounded-[3px] bg-[#c5eef7]"></i><i class="w-[63px] h-[7px] rounded-[3px] bg-[#c5eef7]"></i></div>
    </div>
    <div class="flex h-[1789px] bg-linear-to-b from-white from-50% to-[#e6e6e6]">
      <div class="w-[899px] shrink-0 text-[34px] leading-[43px]">
        <h3 class="pt-[25px] pl-[65px] font-bold tracking-[0.07em]">Symptom Averages</h3>
        <div data-averages class="pl-[64px] mt-[14px] leading-[43.2px]"></div>

        <div class="flex items-start mt-[49px] pl-[24px]"><svg class="mt-[14px] mr-[18px] w-[27px] h-[31px]"><use href="#right"/></svg><h3 class="font-bold tracking-[0.0495em]">Monday, September 18th</h3></div>

        <div class="flex items-start mt-[31px] h-[43px] pl-[24px]"><svg class="mt-[14px] mr-[13px] w-[31px] h-[28px]"><use href="#down"/></svg><h3 class="w-[438px] font-bold tracking-[0.056em]">Tuesday, September 19th</h3><svg class="mt-[3px] mr-[15px] w-[42px] h-[42px]"><use href="#cal"/></svg><span class="-mt-px tracking-[0.04em]">3:00 PM</span></div>
        <div data-averages class="pl-[74px] mt-[21px] leading-[43.2px]"></div>

        <div class="flex items-start mt-[21px] pl-[73px]"><svg class="mt-[16px] mr-[17px] w-[25px] h-[22px]"><use href="#down"/></svg><h4 class="font-bold tracking-[0.06em]">Crisis Assistant</h4></div>
        <div class="flex ml-[140px] mt-[17px] h-[158px] border-l-4 border-[#88b3d6] pl-[28px]">
          <div class="-mt-[10px] leading-[43.3px]">
            <div class="flex gap-[26px]"><b class="tracking-[0.0563em]">Crises Reported:</b><span>7</span></div>
            <div class="flex gap-[26px]"><b class="tracking-[0.062em]">Crisis Symptoms:</b><span class="tracking-[0.031em]">Dissociation</span></div>
            <div class="flex gap-[26px]"><b class="tracking-[0.0517em]">Average Duration:</b><span class="tracking-[0.0566em]">3 min 10 s</span></div>
            <div class="flex gap-[26px]"><b class="tracking-[0.0446em]">Most Used Tool:</b><span class="tracking-[0.0336em]">EMDR</span></div>
          </div>
        </div>

        <div class="flex items-start mt-[15px] pl-[73px]"><svg class="mt-[14px] mr-[14px] w-[25px] h-[22px]"><use href="#down"/></svg><h4 class="font-bold tracking-[0.045em]">Journal Entries</h4></div>
        <div class="flex ml-[131px] mt-[15px] w-[574px] h-[97px] border-2 border-[#2b4666] bg-[#b8dbf1] pl-[14px] pt-[6px] text-[29.5px] leading-[36px] text-[#2b4666]">
          <p class="w-[449px]"><span class="tracking-[0.0145em]">Reminded of the incident after looking at</span><br><span class="tracking-[0.0211em]">some old photos</span></p>
          <span class="mt-[49px] text-[24px] leading-[36px] tracking-[0.025em] text-[#1a2738]">2:30 pm</span>
        </div>
        <div class="flex ml-[130px] mt-[27px] w-[574px] h-[98px] border-2 border-[#2b4666] bg-[#b8dbf1] pl-[15px] pt-[5px] text-[29.5px] leading-[36px] text-[#2b4666]">
          <p class="w-[449px]"><span class="tracking-[0.016em]">Heard a loud screech from a train which</span><br><span class="tracking-[0.0253em]">triggered a flashback</span></p>
          <span class="mt-[45px] text-[24px] leading-[36px] tracking-[0.025em] text-[#1a2738]">5:21 pm</span>
        </div>

        <div class="flex items-start mt-[9px] pl-[78px]"><svg class="mt-[16px] mr-[12px] w-[25px] h-[22px]"><use href="#down"/></svg><h4 class="font-bold tracking-[0.058em]">Session Notes</h4></div>
        <div class="flex ml-[140px] mt-[14px] h-[248px] border-l-4 border-[#88b3d6] pl-[21px] text-[#2b4666]">
          <p class="-mt-[8px] text-[32.5px] leading-[43.2px]"><span class="tracking-[0.0625em]">Spoke about flashback frequency and how to</span><br><span class="tracking-[0.069em]">manage symptoms using Mira for PTSD</span><br><br><span class="tracking-[0.0645em]">Anxiety attacks getting worse.</span><br><br><span class="tracking-[0.062em]">New anti-anxiety medication</span></p>
        </div>

        <div class="flex items-start mt-[32px] h-[43px] pl-[24px]"><svg class="mt-[11px] mr-[20px] w-[31px] h-[28px]"><use href="#down"/></svg><h3 class="w-[450px] font-bold tracking-[0.0575em]">Thursday, September 21st</h3><svg class="mt-[3px] mr-[15px] w-[42px] h-[42px]"><use href="#cal"/></svg><span class="-mt-px tracking-[0.04em]">3:00 PM</span></div>
        <div data-averages class="pl-[76px] mt-[20px] leading-[43.6px]"></div>

        <div class="flex items-start mt-[7px] pl-[80px]"><svg class="mt-[11px] mr-[15px] w-[22px] h-[26px]"><use href="#right"/></svg><h4 class="font-bold tracking-[0.06em]">Crisis Assistant</h4></div>
        <div class="flex items-start mt-[19px] pl-[79px]"><svg class="mt-[11px] mr-[21px] w-[22px] h-[26px]"><use href="#right"/></svg><h4 class="font-bold tracking-[0.045em]">Journal Entries</h4></div>
        <div class="flex items-start mt-[15px] pl-[79px]"><svg class="mt-[11px] mr-[21px] w-[22px] h-[26px]"><use href="#right"/></svg><h4 class="font-bold tracking-[0.058em]">Session Notes</h4></div>

        <div class="flex ml-[21px] mt-[23px] w-[859px] h-[105px] rounded-[14px] border-3 border-[#2b4564] bg-white items-center pl-[16px] text-[31px] leading-[98px]">
          <svg class="w-[58px] h-[58px]" viewBox="0 0 58 58"><circle cx="29" cy="29" r="29" fill="#1a2738"/><path d="M15 20.5H43M15 29H43M15 37.5H43" stroke="#fff" stroke-width="5" stroke-linecap="round"/></svg>
          <span class="ml-[34px] w-[669px] tracking-[0.0605em]">Type a note or send a message to John</span>
          <svg class="w-[58px] h-[58px]" viewBox="0 0 58 58" fill="none" stroke="#fff" stroke-width="5" stroke-linecap="round" stroke-linejoin="round"><circle cx="29" cy="29" r="29" fill="#1a2738" stroke="none"/><path d="M28.5 11V46M20 22L28.5 10.5L37 22"/></svg>
        </div>
      </div>
      <div class="w-[17px] h-[1783px] rounded-[8px] bg-[#cccccc] pt-[1356px]"><div class="w-[17px] h-[426px] rounded-[8px] bg-[#808080]"></div></div>
    </div>
  </aside>
</div>

<script>
// Calendar: "c" marks an appointment, "p" a medication day
const weeks = [
  ['27','28','29c','30','31c','1','2'],
  ['3','4','5c','6','7c','8','9'],
  ['10','11','12c','13','14c','15p','16'],
  ['17','18','19c','20','21c','22','23'],
  ['24','25','26c','27','28c','29','30']
];
const rowClass = [
  'ml-[12px] h-[66px] leading-[66px]', 'ml-[12px] h-[67px] leading-[66px]', 'ml-[12px] h-[73px] leading-[66px]',
  'ml-[18px] w-[609px] h-[51px] leading-[51px] bg-[#b8dbf1] pt-px', 'ml-[12px] mt-[12px] h-[66px] leading-[66px]'
];
const calIcon = '<svg class="absolute left-[67px] top-1/2 -mt-[11px] w-[24px] h-[24px]"><use href="#cal"/></svg>';
const pillIcon = '<svg class="absolute left-[66px] top-1/2 -mt-[13px] w-[26px] h-[22px]" viewBox="0 0 26 22"><g transform="rotate(-38 13 11)"><rect x="1" y="6" width="24" height="10" rx="5" fill="#fff" stroke="#2b4666" stroke-width="1.3"/><path d="M13 5.5V16.5H6Q.5 16 .5 11Q.5 6 6 5.5Z" fill="#2b4666"/></g></svg>';
document.getElementById('weeks').innerHTML = weeks.map((w, r) =>
  `<div class="${rowClass[r]}"><div class="${r === 3 ? '-ml-[6px] ' : ''}grid w-[630px] grid-cols-[repeat(7,90px)]">` + w.map((d, c) => {
    const n = d.replace(/\D/, ''), tone = r === 0 && c < 5 ? 'text-[#88b3d6]' : r === 4 && c === 6 ? 'text-[#1a2738]' : '';
    return `<span class="relative text-center tracking-[-0.03em] ${tone}">${n}${d.endsWith('c') ? calIcon : d.endsWith('p') ? pillIcon : ''}</span>`;
  }).join('') + '</div></div>').join('');

// Symptom averages, repeated for the overview and each session
const down = '<svg class="w-[20px] h-[17px]" viewBox="0 0 20 17"><path d="M0 0H20L10 17Z" fill="#009245"/></svg>';
const up = '<svg class="w-[20px] h-[17px]" viewBox="0 0 20 17"><path d="M0 17H20L10 0Z" fill="#ed1c24"/></svg>';
document.querySelectorAll('[data-averages]').forEach(el => el.innerHTML = `
  <div class="flex">
    <span class="w-[223px] tracking-[0.0349em]">Dissociation:</span><b class="w-[67px] text-[#2b4666] tracking-[0.07em]">3.9</b><span class="w-[44px] pt-[18px]">${down}</span>
    <span class="w-[209px] tracking-[0.0412em]">Depression:</span><b class="w-[66px] text-[#2b4666] tracking-[0.07em]">4.4</b><span class="pt-[7px]">${up}</span>
  </div>
  <div class="flex">
    <span class="w-[153px] pl-[2px] tracking-[0.0498em]">Anxiety:</span><b class="w-[62px] text-[#2b4666] tracking-[0.07em]">2.1</b><span class="w-[128px] pt-[17px]">${down}</span>
    <span class="w-[211px] tracking-[0.0607em]">Aggression:</span><b class="w-[61px] text-[#2b4666] tracking-[0.07em]">1.2</b><span class="pt-[8px]">${up}</span>
  </div>`);

// Crisis markers on the map
const R = '#e94857', O = '#f3a32a', G = '#84c06f', P = '#865daa';
document.getElementById('crises').innerHTML = [
  [593,1171,G],[608,1256,P],[681,1235,R],[556,1288,R],[656,1310,P],[708,1320,P],[608,1351,G],[561,1383,O],[687,1394,R],[635,1436,O],
  [1440,456,O],[1403,530,O],[1533,498,R],[1450,550,R],[1424,646,O],[1481,625,G],[1523,604,R],[1403,1288,G],[1403,1425,O],[1863,477,O]
].map(([x, y, c]) => `<ellipse cx="${x}" cy="${y}" rx="21" ry="42.3" fill="${c}"/>`).join('');

// Charts
const days = ['Sunday','Monday','Tuesday','Wednesday','Thursday','Friday','Saturday'];
const dayW = [92, 97, 99, 144, 113, 73, 108];
const label = (x, y, t, w, a = 'middle') => `<text x="${x}" y="${y}" text-anchor="${a}"${w ? ` textLength="${w}"` : ''}>${t}</text>`;
const dayLabels = (xs, y1, y2) => xs.map((x, i) => label(x, y1, days[i], dayW[i]) + label(x, y2, '9/' + (17 + i), 56)).join('');

const stacks = [
  [1109.3, 1452.6, [[1256,R],[1382,O],[1400,G]]], [1323.5, 1451.4, [[1280.2,R],[1355,O],[1402.8,P]]],
  [1530.5, 1451.4, [[1286,R],[1355,O],[1376.2,G],[1427,P]]], [1746.4, 1451.4, [[1355,R],[1427,P]]],
  [1956.5, 1451.4, [[1334,R],[1402.8,G]]], [2164.6, 1452.6, [[1404.5,R]]], [2373.2, 1451.4, [[1256.4,R],[1331,O],[1379,G]]]
];
document.getElementById('report').innerHTML +=
  stacks.map(([x, base, parts]) => parts.map(([y, c], i) => `<rect x="${x}" y="${y}" width="87.3" height="${(parts[i + 1]?.[0] ?? base) - y}" fill="${c}"/>`).join('')).join('') +
  [['10',1210.8,1033],['8',1261.8,1034],['6',1312.9,1033],['4',1360.8,1031.7],['2',1405.7,1030.5],['0',1456.5,1031.7]].map(([t, y, x]) => label(x, y, t)).join('') +
  `<text transform="translate(1002.5 1343) rotate(-90)" text-anchor="middle" textLength="210">Number of Crises</text>` +
  dayLabels([1142.7,1364.6,1574,1781.6,1999.5,2210,2417], 1482.2, 1514.3);

const ratings = [
  [1118.2,1941.2,1160.6,1815.3,1998.4,'2.6',1087,1969.3], [1331.8,1747,1373.6,1719.4,1902.4,'4.8',1299.6,1776.9],
  [1538.2,1890.2,1580,1818.6,2001.2,'3.1',1506,1918.8], [1754.2,2013.3,1799,1995,2088.7,'1.8',1725.6,2047],
  [1964.2,1977.3,2006,1905.2,1998.4,'2.2',1934.4,2015.2], [2170.6,2100.4,2213,2082.2,2175.3,'0.9',2137.8,2128.5],
  [2380.7,1839.7,2422.4,1722.2,1905.2,'3.8',2348.4,1873.8]
];
const diamond = (x, y) => `<path d="M${x} ${y - 16.7}L${x + 17} ${y}L${x} ${y + 16.7}L${x - 17} ${y}Z" fill="#c1272d"/>`;
document.getElementById('rating').innerHTML +=
  ratings.map(([x, y, cx, hi, lo, t, tx, ty]) =>
    `<rect x="${x}" y="${y}" width="87.1" height="${2175.3 - y}"/><path d="M${cx} ${hi}V${lo}" stroke="#c1272d" stroke-width="5.5"/>` +
    diamond(cx, hi) + diamond(cx, lo) + label(tx, ty, t, 39)).join('') +
  [['5',1726.4,1039.5],['4',1824.7,1040],['3',1915.5,1039.5],['2',2002,1039.5],['1',2095.3,1038],['0',2182.3,1037]].map(([t, y, x]) => label(x, y, t)).join('') +
  `<text transform="translate(1000 1930.5) rotate(-90)" text-anchor="middle" textLength="217">Symptom Ratings</text>` +
  dayLabels([1154,1376,1586,1793.6,2012,2222,2428.4], 2214.2, 2246.5);
</script>
</body>
</html>
